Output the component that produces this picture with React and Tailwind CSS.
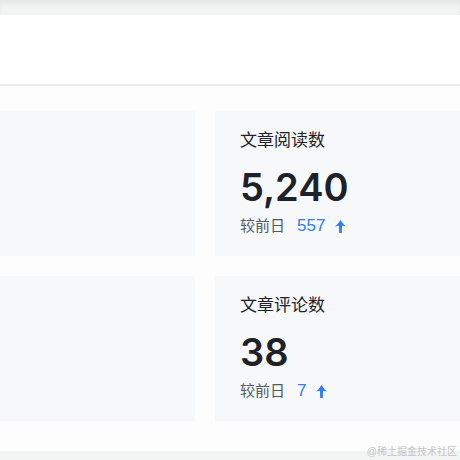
import React from 'react';

const ArrowUp = () => (
    <svg width="11" height="13" viewBox="0 0 10 12" className="ml-[10px]" fill="#2f7cf6">
        <path d="M5 0C6.4 2.4 8 4.2 10 5.9L6.4 5.3L6.2 12H3.8L3.6 5.3L0 5.9C2 4.2 3.6 2.4 5 0Z" />
    </svg>
);

const StatCard = ({ title, value, delta }) => (
    <div className="h-[145px] bg-[#f7f8fa] pl-[25px] pt-[18px]">
        <div className="text-[17px] leading-[24px] text-[#1d2129]">{title}</div>
        <div className="mt-[10px] text-[38px] leading-[48px] font-semibold text-[#1d2129] font-['Inter']">{value}</div>
        <div className="mt-[3px] flex items-center h-[24px]">
            <span className="text-[15px] text-[#4e5969]">较前日</span>
            <span className="ml-[12px] text-[17px] text-[#2f7cf6]">{delta}</span>
            <ArrowUp />
        </div>
    </div>
);

export default function App() {
    return (
        <div className="relative w-[460px] h-[460px] overflow-hidden bg-white" style={{ fontFamily: '"Liberation Sans", "Noto Sans CJK SC", sans-serif' }}>
            <div className="h-[15px] bg-[#f2f3f3] shadow-[inset_0_4px_4px_rgba(0,0,0,0.05)]" />
            <div className="h-[71px] bg-white border-b-2 border-[#ebebef]" />
            <div className="pt-[25px] grid grid-cols-[195px_245px] gap-x-[20px] gap-y-[20px] bg-[#fdfdfd] pb-[30px]">
                <div className="h-[145px] bg-[#f7f8fa]" />
                <StatCard title="文章阅读数" value="5,240" delta="557" />
                <div className="h-[145px] bg-[#f7f8fa]" />
                <StatCard title="文章评论数" value="38" delta="7" />
            </div>
            <div className="h-[20px] bg-[#f2f3f3]" />
            <div className="absolute right-[3px] bottom-[2px] text-[10px] leading-[12px] text-[#c4c4c4]">@稀土掘金技术社区</div>
        </div>
    );
}
